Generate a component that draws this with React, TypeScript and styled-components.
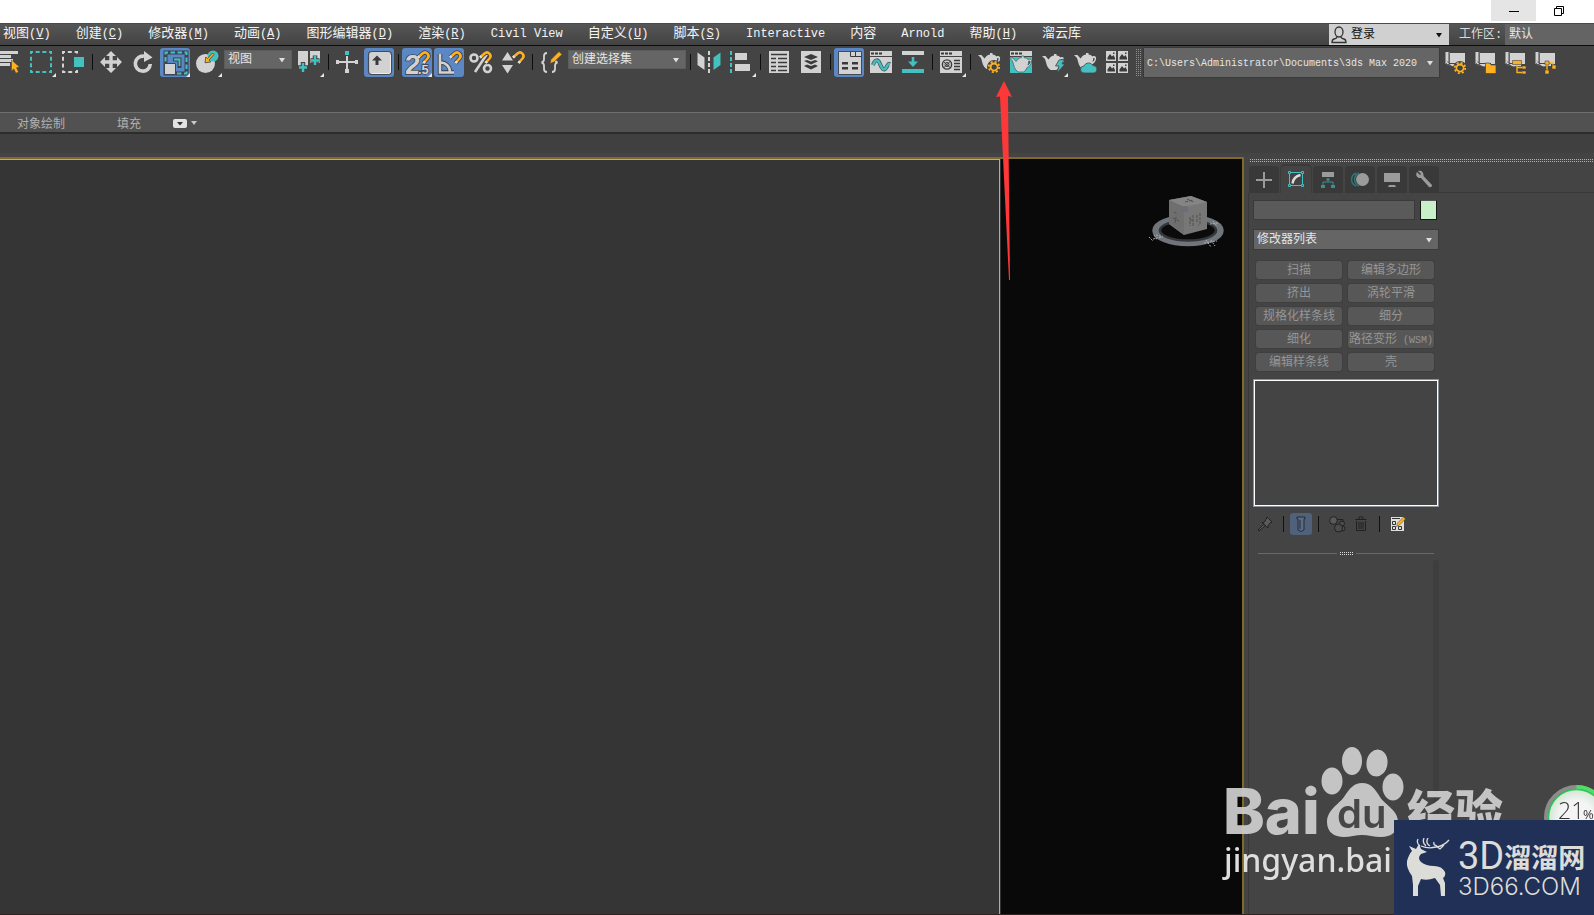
import React from "react";
import styled, { createGlobalStyle, css } from "styled-components";

const TEAL = "#45c0c0";
const LIGHT = "#d2d2d2";
const DARK = "#3a3a3a";
const ORANGE = "#ffb01f";
const UI_FONT = `"Liberation Mono", "Noto Sans CJK SC", monospace`;
const CJK_FONT = `"Noto Sans CJK SC", "Liberation Sans", sans-serif`;

const dots = (color: string, back: string) => css`
  background:
    linear-gradient(${back} 1px, transparent 1px) 0 1px / 2px 2px,
    linear-gradient(90deg, ${color} 1px, transparent 1px) 0 0 / 2px 2px;
`;

const GlobalStyle = createGlobalStyle`
  * { box-sizing: border-box; }
  body { margin: 0; background: #444; overflow: hidden; }
  button, input, select { font: inherit; color: inherit; margin: 0; padding: 0; border: 0; border-radius: 0; background: none; }
  svg { display: block; }
`;

const Page = styled.div`
  min-height: 100vh;
  display: flex;
  flex-direction: column;
  background: #444;
  color: #e6e6e6;
  font: 12px/16px ${UI_FONT};
`;

/* ---------- title bar and menu ---------- */

const TitleBar = styled.header`
  height: 23px;
  background: #fff;
  display: flex;
  justify-content: flex-end;
  padding-right: 13px;
`;

const WindowButton = styled.button<{ $hover?: boolean }>`
  width: 45px;
  height: 21px;
  display: grid;
  place-items: center;
  background: ${(p) => (p.$hover ? "#e5e5e5" : "transparent")};
`;

const MenuBar = styled.nav`
  height: 23px;
  display: flex;
  align-items: stretch;
  background: linear-gradient(#565656, #434343);
  border-top: 1px solid #4a4a4a;
  border-bottom: 1px solid #0c0c0c;
`;

const MenuList = styled.div`
  flex: 1;
  display: flex;
  gap: 25px;
  padding: 0 0 2px 3px;
`;

const MenuItem = styled.button`
  color: #f4f4f4;
  white-space: nowrap;
`;

const MenuWord = styled.span`
  font-size: 13px;
`;

const LoginButton = styled.button`
  width: 120px;
  display: flex;
  align-items: center;
  gap: 4px;
  padding: 0 6px 0 2px;
  background: #d0d0d0;
  color: #111;
  & > :last-child { margin-left: auto; }
`;

const WorkspaceLabel = styled.label`
  width: 56px;
  padding: 3px 0 0 10px;
  color: #dcdcdc;
  white-space: nowrap;
`;

const WorkspaceSelect = styled.select`
  width: 89px;
  padding: 1px 0 0 4px;
  appearance: none;
  background: #646464;
  color: #e6e6e6;
`;

/* ---------- main toolbar ---------- */

const Toolbar = styled.div`
  height: 66px;
  display: flex;
  align-items: flex-start;
  gap: 2px;
  padding-top: 2px;
  margin-left: -6px;
  & > * { flex: none; }
`;

const ToolButtonRoot = styled.button<{ $active?: boolean }>`
  width: 30px;
  height: 29px;
  border-radius: 3px;
  ${(p) => p.$active && css`background: #5b87c4;`}
`;

const Separator = styled.span`
  width: 4px;
  height: 16px;
  margin-top: 6px;
  display: flex;
  justify-content: center;
  &::before { content: ""; width: 1px; background: #0e0e0e; }
`;

const SelectBox = styled.div<{ $width: number; $tall?: boolean }>`
  width: ${(p) => p.$width}px;
  height: ${(p) => (p.$tall ? 21 : 19)}px;
  display: grid;
  grid-template-columns: 1fr 18px;
  align-items: center;
  justify-items: center;
  background: #656565;
  border: 1px solid ${(p) => (p.$tall ? "#3a3a3a" : "#5c5c5c")};
  & > * { grid-row: 1; }
  & > svg { grid-column: 2; pointer-events: none; }
`;

const SelectControl = styled.select`
  grid-column: 1 / 3;
  width: 100%;
  height: 100%;
  padding: 1px 0 0 3px;
  appearance: none;
  color: #e6e6e6;
`;

const ToolSelect = styled(SelectBox)`
  margin-top: 2px;
`;

const Grip = styled.span`
  width: 5px;
  height: 28px;
  margin: 1px 0 0 2px;
  ${dots("#8f8f8f", "#444")}
`;

const PathBox = styled(SelectBox)`
  height: 31px;
  border-color: #3a3a3a;
  font-size: 10px;
  margin-top: -1px;
  & > select { padding-top: 3px; }
`;

const ProjectButtons = styled.div`
  display: flex;
  margin-left: -2px;
`;

/* ---------- ribbon ---------- */

const Ribbon = styled.div`
  height: 22px;
  display: flex;
  align-items: center;
  gap: 52px;
  padding: 1px 17px 0;
  background: #515151;
  border-top: 1px solid #6e6e6e;
  border-bottom: 2px solid #2c2c2c;
  font-family: ${CJK_FONT};
  color: #b0b0b0;
`;

const RibbonMenu = styled.button`
  display: flex;
  align-items: center;
  gap: 4px;
  margin-left: -20px;
`;

const Shelf = styled.div`
  height: 23px;
  background: #404040;
  border-bottom: 4px solid #444;
`;

/* ---------- workspace ---------- */

const Workspace = styled.div`
  flex: 1;
  display: flex;
  border-bottom: 1px solid #2e2424;
`;

const Viewports = styled.main`
  flex: 1;
  display: flex;
  border: solid #7f6a2a;
  border-width: 2px 2px 0 0;
`;

const ActiveViewport = styled.section`
  flex: 1;
  background: #353535;
  border: solid #c3bc12;
  border-width: 1px 1px 0 0;
`;

const RenderViewport = styled.section`
  width: 242px;
  padding: 34px 16px 0 0;
  background: #090909;
  border-left: 1px solid #333;
  display: flex;
  justify-content: flex-end;
  align-items: flex-start;
`;

const SidePanel = styled.aside`
  width: 350px;
  padding: 2px 0 0 4px;
  display: flex;
  flex-direction: column;
`;

const PanelGrip = styled.div`
  height: 3px;
  margin: 0 0 4px 2px;
  ${dots("#b4b4b4", "#444")}
`;

const TabRow = styled.div`
  display: flex;
  gap: 2px;
  padding-left: 1px;
  &::after { content: ""; flex: 1; margin-left: -2px; border-bottom: 1px solid #393939; }
`;

const PanelTab = styled.button<{ $active?: boolean }>`
  width: 30px;
  height: 27px;
  border-radius: 4px 4px 0 0;
  background: ${(p) => (p.$active ? "#444" : "#393939")};
  box-shadow: ${(p) => (p.$active ? "0 -1px 0 1px #3a3a3a" : "none")};
  ${(p) => p.$active && css`clip-path: inset(-2px -2px 0 -2px);`}
`;

const PanelBody = styled.div`
  flex: 1;
  width: 192px;
  padding: 7px 0 0 4px;
  border-left: 1px solid #393939;
  display: flex;
  flex-direction: column;
`;

const NameRow = styled.div`
  display: flex;
  gap: 5px;
  margin-bottom: 9px;
`;

const NameInput = styled.input`
  width: 162px;
  height: 20px;
  background: #5a5a5a;
  border: 1px solid #3a3a3a;
`;

const ColorSwatch = styled.button`
  width: 17px;
  height: 20px;
  background: #c8f0c8;
  border: 1px solid #161616;
  border-top-color: #555;
`;

const ModifierGrid = styled.div`
  display: grid;
  grid-template-columns: 86px 86px;
  gap: 5px 6px;
  margin: 11px 0 8px 3px;
`;

const ModifierButton = styled.button`
  height: 18px;
  padding-top: 2px;
  line-height: 16px;
  border-radius: 3px;
  background: #575757;
  color: #959595;
  box-shadow: 0 0 0 1px #3f3f3f;
  white-space: nowrap;
`;

const Narrow = styled.span`
  font-size: 10px;
`;

const ModifierStack = styled.div`
  width: 186px;
  height: 128px;
  border: 1px solid #8b8f98;
  outline: 1px solid #fff;
  outline-offset: -2px;
`;

const StackTools = styled.div`
  height: 22px;
  display: flex;
  align-items: center;
  margin: 6px 0 17px;
`;

const StackButton = styled.button<{ $active?: boolean }>`
  width: 24px;
  height: 22px;
  display: grid;
  place-items: center;
  border-radius: 3px;
  ${(p) => p.$active && css`background: #4f617b; width: 22px;`}
`;

const StackSeparator = styled.span`
  width: 1px;
  height: 16px;
  margin: 0 6px;
  background: #111;
`;

const RolloutDivider = styled.div`
  height: 3px;
  display: flex;
  align-items: center;
  gap: 3px;
  margin: 0 6px 5px 5px;
  &::before, &::after { content: ""; flex: 1; height: 1px; background: #686868; }
`;

const DividerDots = styled.span`
  width: 13px;
  height: 3px;
  ${dots("#dcdcdc", "#444")}
`;

const ScrollTrack = styled.div`
  flex: 1;
  width: 6px;
  margin-left: 180px;
  border-radius: 3px 3px 0 0;
  background: #3e3e3e;
`;

/* ---------- things floating over the window ---------- */

const PointerArrow = styled.svg`
  position: absolute;
  left: 996px;
  top: 81px;
`;

const PawLogo = styled.div`
  position: fixed;
  right: 82px;
  bottom: 28px;
  width: 292px;
  height: 142px;
  pointer-events: none;
`;

const LoadBadge = styled.div`
  position: fixed;
  right: -15px;
  bottom: 65px;
`;

const BrandBadge = styled.div`
  position: fixed;
  right: 0;
  bottom: 0;
  width: 200px;
  height: 95px;
  display: flex;
  gap: 8px;
  padding: 18px 0 0 10px;
  background: #213056;
`;

const BrandText = styled.div`
  display: flex;
  flex-direction: column;
  color: #dcdcd8;
`;

const BrandName = styled.div`
  display: flex;
  align-items: center;
  height: 37px;
  font: 38px/37px Roboto, sans-serif;
`;

const BrandCjk = styled.span`
  font: 700 27px/37px ${CJK_FONT};
`;

const BrandUrl = styled.div`
  font: 300 24px/24px Inter, sans-serif;
`;

/* ---------- icons ---------- */

const Caret = ({ color = "#dedede" }: { color?: string }) => (
  <svg width="8" height="6" viewBox="0 0 8 6"><path d="M1 1h6L4 5.5z" fill={color} /></svg>
);

const Magnet = ({ x = 15, y = 3 }: { x?: number; y?: number }) => (
  <g transform={`translate(${x} ${y})`} fill="none" strokeWidth="2.6">
    <path d="M1 6.5 5.5 2.6C9-.4 13.4 4 10.5 7.5L6.5 12" stroke="#3c4048" strokeWidth="4.2" />
    <path d="M1 6.5 5.5 2.6C9-.4 13.4 4 10.5 7.5L6.5 12" stroke={ORANGE} />
    <path d="M1 6.5 2.5 5.2M8 10.3 6.5 12" stroke="#e0e0e0" />
  </g>
);

const Teapot = ({ dx = 0, dy = 0 }: { dx?: number; dy?: number }) => (
  <g transform={`translate(${dx} ${dy})`}>
    <path d="M4 8h3.500l3 3.500 2-2.500q1.500-1.300 3.500-1.400V6h2.500v1.600q2.500.200 4 1.800c2-.900 4 .100 3.600 2.600-.300 2.700-2.500 4.600-4.600 5.600q-1 2.400-3 4.400h-6q-2.500-1.800-3.600-4.600L7 11z" fill={LIGHT} />
    <path d="M23.200 11q1.500-.500 1.500 1-.300 2-2.300 3 .9-2 .8-4z" fill="#444" />
  </g>
);

const Header = () => (
  <>
    <path d="M4 3h22v22H4z" fill={LIGHT} />
    <path d="M5 4.500h3v2H5zM9 4.500h3v2H9zM13 4.500h3v2h-3z" fill={DARK} />
    <path d="M4 8.500h22" stroke="#444" />
  </>
);

const Scroll = () => (
  <>
    <path d="M9 5h16v11H9zM5.500 4h3v12h-3zM6 12q5 8 10 6h5v-3H9z" fill={LIGHT} />
    <path d="M9.500 4v11M6 15q1 3 4 2" stroke="#666" fill="none" />
  </>
);

const Gear = ({ x, y }: { x: number; y: number }) => (
  <g transform={`translate(${x} ${y})`} fill="none">
    <circle r="5.500" stroke="#444" strokeWidth="3" />
    <circle r="5.200" stroke={ORANGE} strokeWidth="1.800" strokeDasharray="2.040 2.040" />
    <circle r="3.500" stroke={ORANGE} strokeWidth="1.800" />
    <circle r="2.500" fill="#444" />
  </g>
);

const icons: Record<string, React.ReactNode> = {
  selectByName: (
    <>
      <path d="M4 3h20v3H4zM4 7h13v3H4zM4 11h15v3H4zM4 15h12v3H4z" fill={LIGHT} />
      <path d="M17.500 12l8 7-3 .700 2 4.300-2.600 1.200-2-4.300-2.400 2z" fill={ORANGE} stroke="#444" strokeWidth=".5" />
    </>
  ),
  region: <path d="M5 4h20v20H5z" fill="none" stroke={TEAL} strokeWidth="2" strokeDasharray="4 2.667" strokeDashoffset="2" />,
  windowCrossing: (
    <>
      <path d="M5 4h14v20H5z" fill="none" stroke={LIGHT} strokeWidth="2" strokeDasharray="4 2.800" strokeDashoffset="2" />
      <path d="M15 8h12v12H15z" fill="#444" />
      <path d="M16 9h10v10H16z" fill={TEAL} />
    </>
  ),
  move: <path d="M15 3l5 5h-3.300v4.300H21V9l5 5-5 5v-3.300h-4.300V20H20l-5 5-5-5h3.300v-4.300H9V19l-5-5 5-5v3.300h4.300V8H10z" fill={LIGHT} />,
  rotate: (
    <>
      <path d="M16 8.200A7.500 7.500 0 1 0 22.300 16" fill="none" stroke={LIGHT} strokeWidth="3.600" />
      <path d="M16 3l8.500 6.500L16 14z" fill={LIGHT} />
    </>
  ),
  scale: (
    <>
      <path d="M5.500 4.500h21v21h-21z" fill="none" stroke="#3d4550" strokeWidth="4" />
      <path d="M5.500 4.500h21v21h-21z" fill="none" stroke={TEAL} strokeWidth="2" strokeDasharray="4.500 2.500" strokeDashoffset="2" />
      <path d="M8.500 8h15v15h-9v-9h-6z" fill="#5b87c4" />
      <path d="M13 9.500h8.500V20h-4v-6.500H13z" fill="#3d4550" />
      <path d="M14 11.500h5.500V18" fill="none" stroke={TEAL} strokeWidth="1.800" />
      <path d="M4.500 15.500h11v11h-11z" fill={LIGHT} stroke="#3d4550" />
    </>
  ),
  place: (
    <>
      <circle cx="13.500" cy="15.500" r="9.500" fill={LIGHT} />
      <circle cx="21" cy="8" r="5.500" fill={TEAL} />
      <path d="M22 6.500 17 12l1.800 2-5.800.800.800-5.800 1.700 1.500L20.500 5z" fill={ORANGE} stroke="#444" strokeWidth=".8" />
    </>
  ),
  pivot: (
    <>
      <path d="M4 3h10v15H4zM16 3h10v12H16z" fill={LIGHT} />
      <path d="M9 14v11M4 19.500h10M21 7.500v10M16.500 12.500h9" stroke="#444" strokeWidth="4.500" />
      <path d="M9 15v9M5 19.500h8M21 8v9M17 12.500h8" stroke={TEAL} strokeWidth="2.400" />
    </>
  ),
  manipulate: (
    <>
      <path d="M15 8v14M6 14h18" stroke={LIGHT} strokeWidth="2" />
      <path d="M4 12h3v4H4zM23 12h3v4h-3zM13 21h4v4h-4z" fill={LIGHT} />
      <path d="M13 3h4v4h-4z" fill={TEAL} />
    </>
  ),
  keyboard: (
    <>
      <rect x="4.500" y="3.500" width="23" height="23" rx="3.500" fill={LIGHT} stroke="#444b55" strokeWidth="1.200" />
      <path d="M26.500 7v17q-.500 1.500-2 1.500H8" fill="none" stroke="#eee" />
      <path d="M13 7.500l5 5h-3.500V17h-3v-4.500H8z" fill={DARK} />
    </>
  ),
  snap: (
    <>
      <g fontFamily="Liberation Sans, sans-serif" fontWeight="700" fill={LIGHT} stroke="#3c4048" strokeWidth="1.600" paintOrder="stroke">
        <text x="3" y="26" fontSize="28">2</text>
        <text x="16" y="26" fontSize="13">.5</text>
      </g>
      <Magnet x={15} y={3} />
    </>
  ),
  angle: (
    <>
      <g fill="none" stroke="#3c4048" strokeWidth="4.500"><path d="M6 6v18.500h14M6 14.500c6 0 10 4 10 10" /></g>
      <g fill="none" stroke={LIGHT} strokeWidth="2.600"><path d="M6 6v18.500h14M6 14.500c6 0 10 4 10 10" /></g>
      <Magnet x={15} y={3} />
    </>
  ),
  percent: (
    <>
      <g fill="none" stroke={LIGHT} strokeWidth="2.600"><circle cx="8" cy="10" r="3.500" /><circle cx="21.500" cy="20.500" r="3.500" /><path d="M21 6 9 24" /></g>
      <Magnet x={13} y={3} />
    </>
  ),
  spinner: (
    <>
      <path d="M9.500 4l5.500 8.500H4zM4 17h11l-5.500 8.500z" fill={LIGHT} />
      <Magnet x={14} y={3} />
    </>
  ),
  namedSets: (
    <>
      <path d="M11 5q-3 0-3 3v3q0 3-2.500 3.500Q8 15 8 18v3q0 3 3 3M16 24q3 0 3-3v-3q0-3 2.500-3.500Q19 14 19 11" fill="none" stroke={LIGHT} strokeWidth="1.800" />
      <path d="M14 15.500l1-4L23 3.500l3 3-8 7.500z" fill={ORANGE} stroke="#444" strokeWidth=".6" />
    </>
  ),
  mirror: (
    <>
      <path d="M3.500 4.500l7 5V22l-7-5z" fill={LIGHT} />
      <path d="M15 3v22" stroke={LIGHT} strokeWidth="2" strokeDasharray="4 2" />
      <path d="M26.500 4.500l-7 5V22l7-5z" fill={TEAL} />
    </>
  ),
  align: (
    <>
      <path d="M5 3v22" stroke={TEAL} strokeWidth="2" strokeDasharray="4 2" />
      <path d="M9 5h12v7H9zM9 16h15v7H9z" fill={LIGHT} />
    </>
  ),
  table: (
    <>
      <path d="M5 3h20v22H5z" fill={LIGHT} />
      <path d="M7 6.500h16M7 10.500h5M14 10.500h9M7 14.500h5M14 14.500h9M7 18.500h5M14 18.500h9M7 22.500h5M14 22.500h9" stroke={DARK} strokeWidth="1.400" />
    </>
  ),
  layers: (
    <>
      <path d="M5 3h20v22H5z" fill={LIGHT} />
      <path d="M8 9l7-3 7 3-7 3zM8 13l3-1 4 1.600L19 12l3 1.300-7 3.200zM8 18l3-1.500 4 1.600 4-1.600 3 1.500-7 3.500z" fill={DARK} />
    </>
  ),
  ribbon: (
    <>
      <path d="M4.500 3.500h23v23h-23z" fill={LIGHT} stroke="#444b55" />
      <path d="M16.500 4v4.500h11M21.500 4v4" fill="none" stroke={DARK} />
      <path d="M8 14h6v2.500H8zM18 14h6v2.500h-6zM8 19h6v2.500H8zM18 19h6v2.500h-6z" fill={DARK} />
    </>
  ),
  curve: (
    <>
      <Header />
      <path d="M7 17c2-6 5-6 7-1s4 7 6 4 2-5 4-4" fill="none" stroke="#385a5c" strokeWidth="4" />
      <path d="M7 17c2-6 5-6 7-1s4 7 6 4 2-5 4-4" fill="none" stroke={TEAL} strokeWidth="2.400" />
    </>
  ),
  schematic: (
    <>
      <path d="M4 3h22v4H4z" fill={LIGHT} />
      <path d="M4 21h22v4H4zM13.700 9h2.600v4.500H20L15 19l-5-5.500h3.700z" fill={TEAL} />
    </>
  ),
  material: (
    <>
      <Header />
      <circle cx="11" cy="16.500" r="4.600" fill="none" stroke={DARK} strokeWidth="1.400" />
      <path d="M7.500 13.500l7 6.500M14.500 13l-7 7" stroke={DARK} />
      <circle cx="11" cy="16.500" r="2" fill="none" stroke={DARK} />
      <path d="M18 12.500h6M18 15.500h6M18 18.500h6M18 21.500h6" stroke={DARK} strokeWidth="1.500" />
    </>
  ),
  renderSetup: <><Teapot dy={-1} /><Gear x={20} y={19} /></>,
  renderFrame: (
    <>
      <Header />
      <path d="M4 9h22v16H4z" fill={TEAL} />
      <g stroke="#3d6a6c" strokeWidth=".8"><Teapot dx={-0.500} dy={2} /></g>
    </>
  ),
  render: (
    <>
      <Teapot />
      <path d="M21 12l5-1-2 5h3l-8 9 2-7h-3.500z" fill={TEAL} stroke="#444" strokeWidth=".8" />
    </>
  ),
  cloud: (
    <>
      <Teapot dy={-1} />
      <path d="M14 25a3.500 3.500 0 0 1 0-7 5 5 0 0 1 9-.500 3.800 3.800 0 0 1 1 7.500z" fill={TEAL} stroke="#444" strokeWidth=".8" />
    </>
  ),
  library: (
    <>
      {[[4, 3], [16, 3], [4, 15], [16, 15]].map(([x, y]) => (
        <g key={`${x}-${y}`} transform={`translate(${x} ${y})`}>
          <path d="M0 0h10v10H0z" fill={LIGHT} />
          <path d="M1.500 8.500v-2L4 3l2 2.500L7.500 4l1.500 3v1.500zM7 1.500h1.500V3H7z" fill={DARK} />
        </g>
      ))}
    </>
  ),
  projectGear: <><Scroll /><Gear x={20} y={20} /></>,
  projectFolder: <><Scroll /><path d="M15.500 15h4l1.500 2h5v8.500H15.500z" fill={ORANGE} stroke="#444" strokeWidth=".7" /></>,
  projectTree: (
    <>
      <Scroll />
      <path d="M12.500 12.500h9v4h-9zM22 18h4v3h-4zM22 23h4v3h-4z" fill={ORANGE} stroke="#444" strokeWidth=".6" />
      <path d="M17 17v7.500h5M17 19.500h5" fill="none" stroke={ORANGE} strokeWidth="1.400" />
    </>
  ),
  projectGraph: (
    <>
      <Scroll />
      <path d="M17 15h6v3M17 15v8" fill="none" stroke={ORANGE} strokeWidth="1.400" />
      <path d="M15 13h4v4h-4zM22 17h4v4h-4zM15 22h4v4h-4z" fill={ORANGE} stroke="#444" strokeWidth=".6" />
    </>
  ),
};

type ToolProps = { icon: string; label: string; active?: boolean; flyout?: boolean };

const Tool = ({ icon, label, active, flyout }: ToolProps) => (
  <ToolButtonRoot $active={active} aria-label={label} aria-pressed={active}>
    <svg width="30" height="29" viewBox="0 0 30 29">
      {icons[icon]}
      {flyout && <path d="M30 25v4h-4z" fill="#e8e8e8" />}
    </svg>
  </ToolButtonRoot>
);

type DropProps = { label: string; value: string };

const Drop = ({ label, value }: DropProps) => (
  <>
    <SelectControl aria-label={label} defaultValue={value}><option>{value}</option></SelectControl>
    <Caret />
  </>
);

const tabIcons: { label: string; active?: boolean; art: React.ReactNode }[] = [
  { label: "创建", art: <path d="M15 6v16M7 14h16" stroke="#9b9b9b" strokeWidth="2" /> },
  {
    label: "修改",
    active: true,
    art: (
      <>
        <path d="M9 6.500h12M9 19.500h12M8.500 7v13M21.500 7v13" stroke={TEAL} />
        <path d="M7.500 5.500h2v2h-2zM20.500 5.500h2v2h-2zM7.500 18.500h2v2h-2zM20.500 18.500h2v2h-2z" fill="#444" stroke={TEAL} />
        <path d="M11.500 17.500q1-7 8-8.500" fill="none" stroke="#dedede" strokeWidth="2.400" />
      </>
    ),
  },
  {
    label: "层次",
    art: (
      <>
        <path d="M9 6h12v5H9z" fill="#9b9b9b" />
        <path d="M15 12v4M10 19v-3h10v3" fill="none" stroke="#3a9090" />
        <path d="M8 19h4v3H8zM18 19h4v3h-4zM13.500 12.500h3v2h-3z" fill="#3a9090" />
      </>
    ),
  },
  {
    label: "运动",
    art: (
      <>
        <path d="M11 7a7 7 0 0 0 0 13M14 7a7 7 0 0 0 0 13" fill="none" stroke="#2f7777" strokeWidth="1.400" />
        <circle cx="17.500" cy="13.500" r="6.500" fill="#9b9b9b" />
      </>
    ),
  },
  { label: "显示", art: <path d="M7 7h16v9H7zM12 19h6l1 2h-8z" fill="#9b9b9b" /> },
  {
    label: "实用程序",
    art: <path d="M8 6l3 3 1-1-3-3c3-1 6 1 5.500 5l8.500 9q0 3-3 2l-8-9C8 12.500 6 9 8 6z" fill="#9b9b9b" />,
  },
];

const menus: { text: string; accessKey?: string; latin?: boolean }[] = [
  { text: "视图", accessKey: "V" },
  { text: "创建", accessKey: "C" },
  { text: "修改器", accessKey: "M" },
  { text: "动画", accessKey: "A" },
  { text: "图形编辑器", accessKey: "D" },
  { text: "渲染", accessKey: "R" },
  { text: "Civil View", latin: true },
  { text: "自定义", accessKey: "U" },
  { text: "脚本", accessKey: "S" },
  { text: "Interactive", latin: true },
  { text: "内容" },
  { text: "Arnold", latin: true },
  { text: "帮助", accessKey: "H" },
  { text: "溜云库" },
];

const modifiers: React.ReactNode[] = [
  "扫描", "编辑多边形", "挤出", "涡轮平滑", "规格化样条线", "细分", "细化",
  <>路径变形<Narrow> (WSM)</Narrow></>,
  "编辑样条线", "壳",
];

const ViewCube = () => (
  <svg width="78" height="56" viewBox="0 0 78 56" aria-label="ViewCube">
    <ellipse cx="40" cy="37.500" rx="32.500" ry="12.500" fill="none" stroke="#70757c" strokeWidth="6.500" />
    <ellipse cx="40" cy="37.500" rx="28" ry="10" fill="#0b0b0b" stroke="#34373b" strokeWidth="2.500" />
    <path d="M21 7 43 3l16 6v27l-23 6L21 31z" fill="#777" />
    <path d="M21 7 43 3l16 6-23 5z" fill="#858585" />
    <path d="M21 7l15 7v28L21 31z" fill="#6f6f6f" />
    <g fill="none" stroke="#505050">
      <path d="M37 9l8-2M39 6l7 3M42 24v9M45 22v11M42 27h4M49 22v8M52 20v10q0 2-2 2M26 19l3 2M25 25l6 3M27 30l1-6" strokeDasharray="3 1" />
      <path d="M33 13h7v6h-6z" fill="#6b7078" stroke="none" />
    </g>
    <g fill="none" stroke="#aaa" strokeDasharray="2 1">
      <path d="M1 44l4 4M6 42l3 5M8 42l7 2M5 46l9-2M56 50l13-2M58 47l5 7M63 47l4 6M62 31l8-1M65 28l4 5" />
    </g>
  </svg>
);

const Deer = () => (
  <svg width="46" height="60" viewBox="0 0 46 60" fill="#dcdcd8" aria-label="3D66">
    <path d="M5 8l7 3 3-5 2 5 6 3-6 2q-4 4 0 8 5 4 13 4 8 0 11 6 1 4-2 6l2 5v13h-4l-1-11-5-7q-8 3-14 1l-3 7v10H9V47l-1-9q-6-8-5-15 2-7 5-10z" />
    <path d="M16 8q-4-3-2-7M17 8q7 3 15 1 8-1 13-7M22 8q-4-3-2-8M26 8q-5-3-2-8M32 8l4 3 4-4M33 8q-4-1-3-4" fill="none" stroke="#dcdcd8" strokeWidth="1.300" />
  </svg>
);

export default function App() {
  return (
    <>
      <GlobalStyle />
      <Page>
        <TitleBar>
          <WindowButton $hover aria-label="最小化">
            <svg width="10" height="10" viewBox="0 0 10 10"><path d="M0 5.500h10" stroke="#000" /></svg>
          </WindowButton>
          <WindowButton aria-label="还原">
            <svg width="10" height="10" viewBox="0 0 10 10" fill="none" stroke="#000"><path d="M.5 2.500h7v7h-7zM2.500 2.500v-2h7v7h-2" /></svg>
          </WindowButton>
        </TitleBar>

        <MenuBar>
          <MenuList>
            {menus.map((m) => (
              <MenuItem key={m.text}>
                {m.latin ? m.text : <MenuWord>{m.text}</MenuWord>}
                {m.accessKey && <>(<u>{m.accessKey}</u>)</>}
              </MenuItem>
            ))}
          </MenuList>
          <LoginButton>
            <svg width="16" height="18" viewBox="0 0 16 18" fill="none" stroke="#333" strokeWidth="1.300">
              <ellipse cx="8" cy="6" rx="4" ry="5" /><path d="M6 10.500q0 2-3 2.500-2 .500-2 3.500h14q0-3-2-3.500-3-.500-3-2.500" />
            </svg>
            登录
            <Caret color="#111" />
          </LoginButton>
          <WorkspaceLabel htmlFor="workspace">工作区:</WorkspaceLabel>
          <WorkspaceSelect id="workspace" defaultValue="默认"><option>默认</option></WorkspaceSelect>
        </MenuBar>

        <Toolbar>
          <Tool icon="selectByName" label="按名称选择" />
          <Tool icon="region" label="矩形选择区域" flyout />
          <Tool icon="windowCrossing" label="窗口/交叉" />
          <Separator />
          <Tool icon="move" label="选择并移动" />
          <Tool icon="rotate" label="选择并旋转" />
          <Tool icon="scale" label="选择并缩放" active flyout />
          <Tool icon="place" label="选择并放置" flyout />
          <ToolSelect $width={68}><Drop label="参考坐标系" value="视图" /></ToolSelect>
          <Tool icon="pivot" label="使用轴点中心" flyout />
          <Separator />
          <Tool icon="manipulate" label="选择并操纵" />
          <Tool icon="keyboard" label="键盘快捷键覆盖切换" active />
          <Separator />
          <Tool icon="snap" label="捕捉开关" active flyout />
          <Tool icon="angle" label="角度捕捉切换" active />
          <Tool icon="percent" label="百分比捕捉切换" />
          <Tool icon="spinner" label="微调器捕捉切换" />
          <Separator />
          <Tool icon="namedSets" label="编辑命名选择集" />
          <ToolSelect $width={118}><Drop label="命名选择集" value="创建选择集" /></ToolSelect>
          <Separator />
          <Tool icon="mirror" label="镜像" />
          <Tool icon="align" label="对齐" flyout />
          <Separator />
          <Tool icon="table" label="切换场景资源管理器" />
          <Tool icon="layers" label="切换层资源管理器" />
          <Separator />
          <Tool icon="ribbon" label="显示功能区" active />
          <Tool icon="curve" label="曲线编辑器" />
          <Tool icon="schematic" label="图解视图" />
          <Separator />
          <Tool icon="material" label="材质编辑器" flyout />
          <Separator />
          <Tool icon="renderSetup" label="渲染设置" />
          <Tool icon="renderFrame" label="渲染帧窗口" />
          <Tool icon="render" label="渲染产品" flyout />
          <Tool icon="cloud" label="在云中渲染" />
          <Tool icon="library" label="打开库" />
          <Grip />
          <PathBox $width={297}><Drop label="项目文件夹" value={"C:\\Users\\Administrator\\Documents\\3ds Max 2020"} /></PathBox>
          <ProjectButtons>
            <Tool icon="projectGear" label="设置活动项目" />
            <Tool icon="projectFolder" label="新建项目" />
            <Tool icon="projectTree" label="项目结构" />
            <Tool icon="projectGraph" label="项目关系" />
          </ProjectButtons>
        </Toolbar>

        <Ribbon>
          <button>对象绘制</button>
          <button>填充</button>
          <RibbonMenu aria-label="功能区选项">
            <svg width="14" height="9" viewBox="0 0 14 9"><rect width="14" height="9" rx="2" fill="#e4e4e4" /><path d="M4 3h6L7 6.500z" fill="#333" /></svg>
            <svg width="6" height="4" viewBox="0 0 6 4"><path d="M0 0h6L3 4z" fill="#c8c8c8" /></svg>
          </RibbonMenu>
        </Ribbon>
        <Shelf />

        <Workspace>
          <Viewports>
            <ActiveViewport />
            <RenderViewport><ViewCube /></RenderViewport>
          </Viewports>

          <SidePanel>
            <PanelGrip />
            <TabRow>
              {tabIcons.map((t) => (
                <PanelTab key={t.label} $active={t.active} aria-label={t.label}>
                  <svg width="30" height="27" viewBox="0 0 30 27">{t.art}</svg>
                </PanelTab>
              ))}
            </TabRow>
            <PanelBody>
              <NameRow>
                <NameInput aria-label="对象名称" />
                <ColorSwatch aria-label="对象颜色" />
              </NameRow>
              <SelectBox $width={186} $tall><Drop label="修改器列表" value="修改器列表" /></SelectBox>
              <ModifierGrid>
                {modifiers.map((m, i) => <ModifierButton key={i}>{m}</ModifierButton>)}
              </ModifierGrid>
              <ModifierStack />
              <StackTools>
                <StackButton aria-label="锁定堆栈">
                  <svg width="16" height="16" viewBox="0 0 16 16" fill="#5a5a5a" stroke="#222"><path d="M10 1l5 5-2 1-2 3v2L5 6.500h2l2-3zM7 8l1.500 1.500L2 15l-1-1z" /></svg>
                </StackButton>
                <StackSeparator />
                <StackButton $active aria-label="显示最终结果">
                  <svg width="10" height="17" viewBox="0 0 10 17" fill="#5d6b7f" stroke="#222c3a"><path d="M1 1h8v2H8v11q-3 3-6 0V3H1zM4 4v9" /></svg>
                </StackButton>
                <StackSeparator />
                <StackButton aria-label="使唯一">
                  <svg width="17" height="17" viewBox="0 0 17 17" fill="#4c4c4c" stroke="#222"><path d="M8 3.500h6V6" fill="none" /><circle cx="13" cy="7.500" r="2.500" /><circle cx="13.500" cy="12.500" r="2.500" /><circle cx="9.500" cy="12" r="4" /><circle cx="4.500" cy="4.500" r="3.800" fill="#5a5a5a" /></svg>
                </StackButton>
                <StackButton aria-label="移除修改器">
                  <svg width="12" height="16" viewBox="0 0 12 16" fill="none" stroke="#202020"><path d="M.5 3.500h11M4 3V1h4v2M1.500 5v9.500h9V5M4 6v7M6 6v7M8 6v7" /></svg>
                </StackButton>
                <StackSeparator />
                <StackButton aria-label="配置修改器集">
                  <svg width="16" height="16" viewBox="0 0 16 16"><path d="M1 1h13v14H1z" fill="#dedede" /><path d="M2.500 5.500h3v3h-3zM2.500 10.500h3v3h-3zM8.500 10.500h3v3h-3zM2 2.500h8" fill="none" stroke="#333" /><path d="M6.500 10.500l1-3.500 6-6 2 2-6 6z" fill={ORANGE} stroke="#444" strokeWidth=".5" /></svg>
                </StackButton>
              </StackTools>
              <RolloutDivider><DividerDots /></RolloutDivider>
              <ScrollTrack />
            </PanelBody>
          </SidePanel>
        </Workspace>
      </Page>

      <PointerArrow width="18" height="200" viewBox="0 0 18 200">
        <path d="M8 0l8 16-4-1 2 184h-1L4 15.500 0 16z" fill="#fc3838" />
      </PointerArrow>

      <PawLogo>
        <svg width="292" height="142" viewBox="0 0 292 142" fill="#cdcdcd">
          <g opacity=".94">
            <ellipse cx="112" cy="36" rx="10.500" ry="13.500" />
            <ellipse cx="132" cy="16" rx="10" ry="14" />
            <ellipse cx="157" cy="18" rx="10.500" ry="13.500" transform="rotate(8 157 18)" />
            <ellipse cx="173" cy="42" rx="10.500" ry="13.500" />
            <path d="M142 38c9 0 13 6 18 14 6 9 18 13 18 25 0 10-7 15-17 15-7 0-13-2-19-2s-12 2-18 2c-10 0-17-5-17-15 0-12 11-17 17-25 6-9 10-14 18-14z" />
            <text x="3" y="89" fontFamily="Inter, sans-serif" fontWeight="800" fontSize="63">Bai</text>
            <text x="117" y="83" fontFamily="Inter, sans-serif" fontWeight="600" fontSize="40" fill="#484848">du</text>
            <text x="187" y="85" fontFamily="Noto Sans CJK SC, sans-serif" fontWeight="900" fontSize="48">经验</text>
          </g>
          <text x="4" y="127" fontFamily="Noto Sans, sans-serif" fontWeight="500" fontSize="32" fill="#dedede">jingyan.bai</text>
        </svg>
      </PawLogo>

      <LoadBadge>
        <svg width="65" height="65" viewBox="0 0 65 65">
          <defs><radialGradient id="badge"><stop offset=".6" stopColor="#f4f4f4" /><stop offset="1" stopColor="#d3e6d6" /></radialGradient></defs>
          <circle cx="32.500" cy="32.500" r="30.500" fill="none" stroke="#8c8c8c" strokeWidth="4" />
          <path d="M32.500 2a30.500 30.500 0 0 1 29 21" fill="none" stroke="#4fdc68" strokeWidth="4" />
          <circle cx="32.500" cy="32.500" r="28" fill="url(#badge)" stroke="#2fca55" strokeWidth="1.500" />
          <text x="14" y="34" fontFamily="Open Sans, sans-serif" fontWeight="300" fontSize="23" fill="#333">21</text>
          <text x="39" y="34" fontFamily="Open Sans, sans-serif" fontSize="13" fill="#333">%</text>
        </svg>
      </LoadBadge>

      <BrandBadge>
        <Deer />
        <BrandText>
          <BrandName>3D<BrandCjk>溜溜网</BrandCjk></BrandName>
          <BrandUrl>3D66.COM</BrandUrl>
        </BrandText>
      </BrandBadge>
    </>
  );
}
